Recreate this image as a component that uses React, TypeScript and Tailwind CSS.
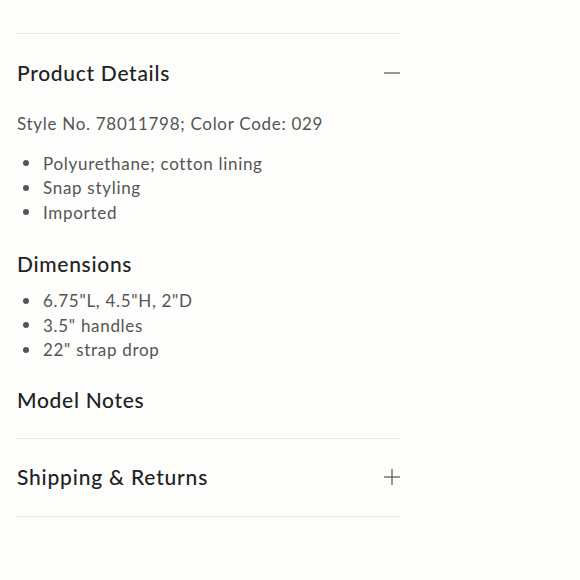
import React from "react";

const font = { fontFamily: "Lato, 'Noto Sans', sans-serif" };

function Minus() {
  return (
    <svg width="16" height="16" viewBox="0 0 16 16" className="text-[#555]">
      <line x1="0" y1="8" x2="16" y2="8" stroke="currentColor" strokeWidth="1.2" />
    </svg>
  );
}

function Plus() {
  return (
    <svg width="16" height="16" viewBox="0 0 16 16" className="text-[#555]">
      <line x1="0" y1="8" x2="16" y2="8" stroke="currentColor" strokeWidth="1.2" />
      <line x1="8" y1="0" x2="8" y2="16" stroke="currentColor" strokeWidth="1.2" />
    </svg>
  );
}

function Bullets({ items }: { items: string[] }) {
  return (
    <ul className="flex flex-col">
      {items.map((t) => (
        <li key={t} className="flex items-center h-[24.5px] text-[17px] text-[#555] tracking-[0.7px]">
          <span className="w-[6px] h-[6px] rounded-full bg-[#555] ml-[6px] mr-[14px]" />
          <span>{t}</span>
        </li>
      ))}
    </ul>
  );
}

export default function App() {
  return (
    <div className="min-h-[580px] w-full bg-[#fdfdfb] pt-[33px]" style={font}>
      <div className="ml-[17px] w-[383px]">
        <div className="border-t border-[#e6e6e4]">
          <div className="h-[77px] flex items-center justify-between">
            <span className="text-[21px] font-medium text-[#222] tracking-[0.7px]">Product Details</span>
            <Minus />
          </div>
          <div className="mt-[1px] leading-[24px] text-[17px] text-[#555] tracking-[0.7px]">
            Style No. 78011798; Color Code: 029
          </div>
          <div className="mt-[15px]">
            <Bullets items={["Polyurethane; cotton lining", "Snap styling", "Imported"]} />
          </div>
          <div className="mt-[25px] leading-[28px] text-[21px] font-medium text-[#222] tracking-[0.7px]">Dimensions</div>
          <div className="mt-[11px]">
            <Bullets items={['6.75"L, 4.5"H, 2"D', '3.5" handles', '22" strap drop']} />
          </div>
          <div className="mt-[23.5px] leading-[28px] text-[21px] font-medium text-[#222] tracking-[0.7px]">Model Notes</div>
          <div className="h-[24px]" />
        </div>
        <div className="border-t border-b border-[#e6e6e4]">
          <div className="h-[77px] flex items-center justify-between">
            <span className="text-[21px] font-medium text-[#222] tracking-[0.8px]">Shipping &amp; Returns</span>
            <Plus />
          </div>
        </div>
      </div>
    </div>
  );
}
